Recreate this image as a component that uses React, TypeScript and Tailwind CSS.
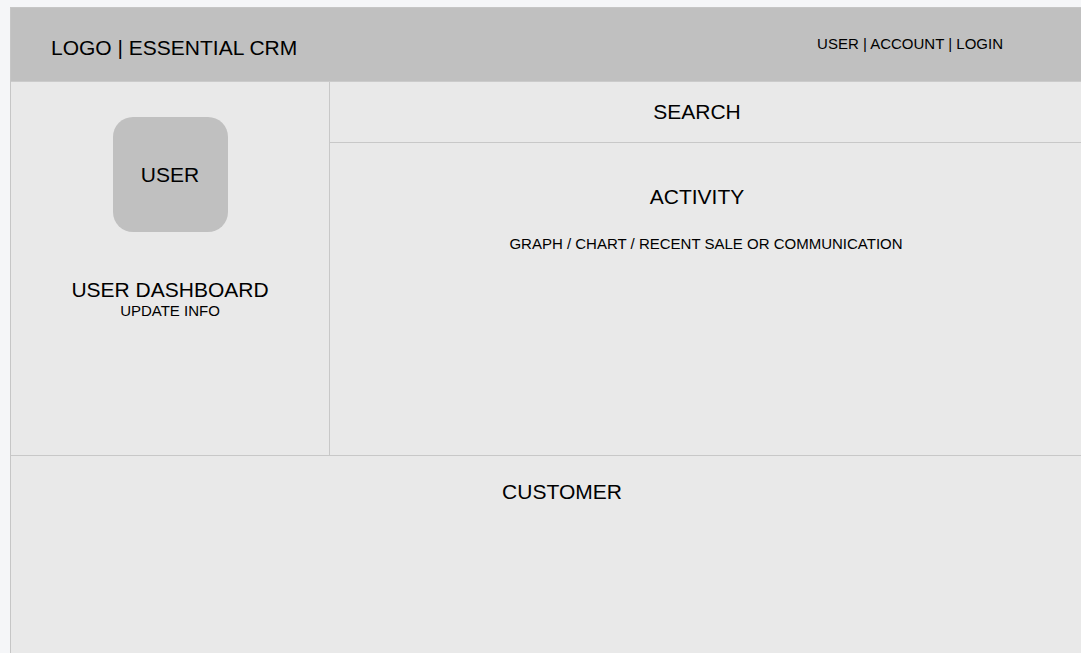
export default function App() {
  return (
    <div
      className="min-h-screen w-full overflow-hidden bg-[#f5f6f8] pt-[7px] pl-[10px] text-black"
      style={{ fontFamily: '"Liberation Sans", Arial, sans-serif' }}
    >
      <div className="flex h-[646px] flex-col border-l border-t border-[#c6c6c6] bg-[#e9e9e9]">
        {/* header */}
        <header className="flex h-[74px] shrink-0 items-center justify-between border-b border-[#cbcbcb] bg-[#c0c0c0] pl-[40px] pr-[78px]">
          <div className="pt-[6px] text-[21px] leading-6">LOGO | ESSENTIAL CRM</div>
          <nav className="pb-[2px] text-[15px] leading-5">USER | ACCOUNT | LOGIN</nav>
        </header>

        {/* middle */}
        <div className="flex h-[374px] shrink-0 border-b border-[#c8c8c8]">
          <aside className="flex w-[319px] shrink-0 flex-col items-center border-r border-[#c8c8c8] pt-[35px]">
            <div className="flex h-[115px] w-[115px] items-center justify-center rounded-[20px] bg-[#c0c0c0] text-[21px] leading-6">
              USER
            </div>
            <div className="mt-[46px] text-[21px] leading-6">USER DASHBOARD</div>
            <div className="text-[15px] leading-[18px]">UPDATE INFO</div>
          </aside>

          <main className="flex flex-1 flex-col">
            <div className="flex h-[61px] shrink-0 items-center justify-center border-b border-[#c8c8c8] pr-[17px] text-[21px] leading-6">
              SEARCH
            </div>
            <section className="flex flex-1 flex-col items-center pr-[17px] pt-[42px]">
              <h2 className="text-[21px] leading-6">ACTIVITY</h2>
              <p className="ml-[18px] mt-[26px] text-[15px] leading-[18px]">
                GRAPH / CHART / RECENT SALE OR COMMUNICATION
              </p>
            </section>
          </main>
        </div>

        {/* customers */}
        <section className="flex flex-1 justify-center pl-[32px] pt-[24px]">
          <h2 className="text-[21px] leading-6">CUSTOMER</h2>
        </section>
      </div>
    </div>
  );
}
